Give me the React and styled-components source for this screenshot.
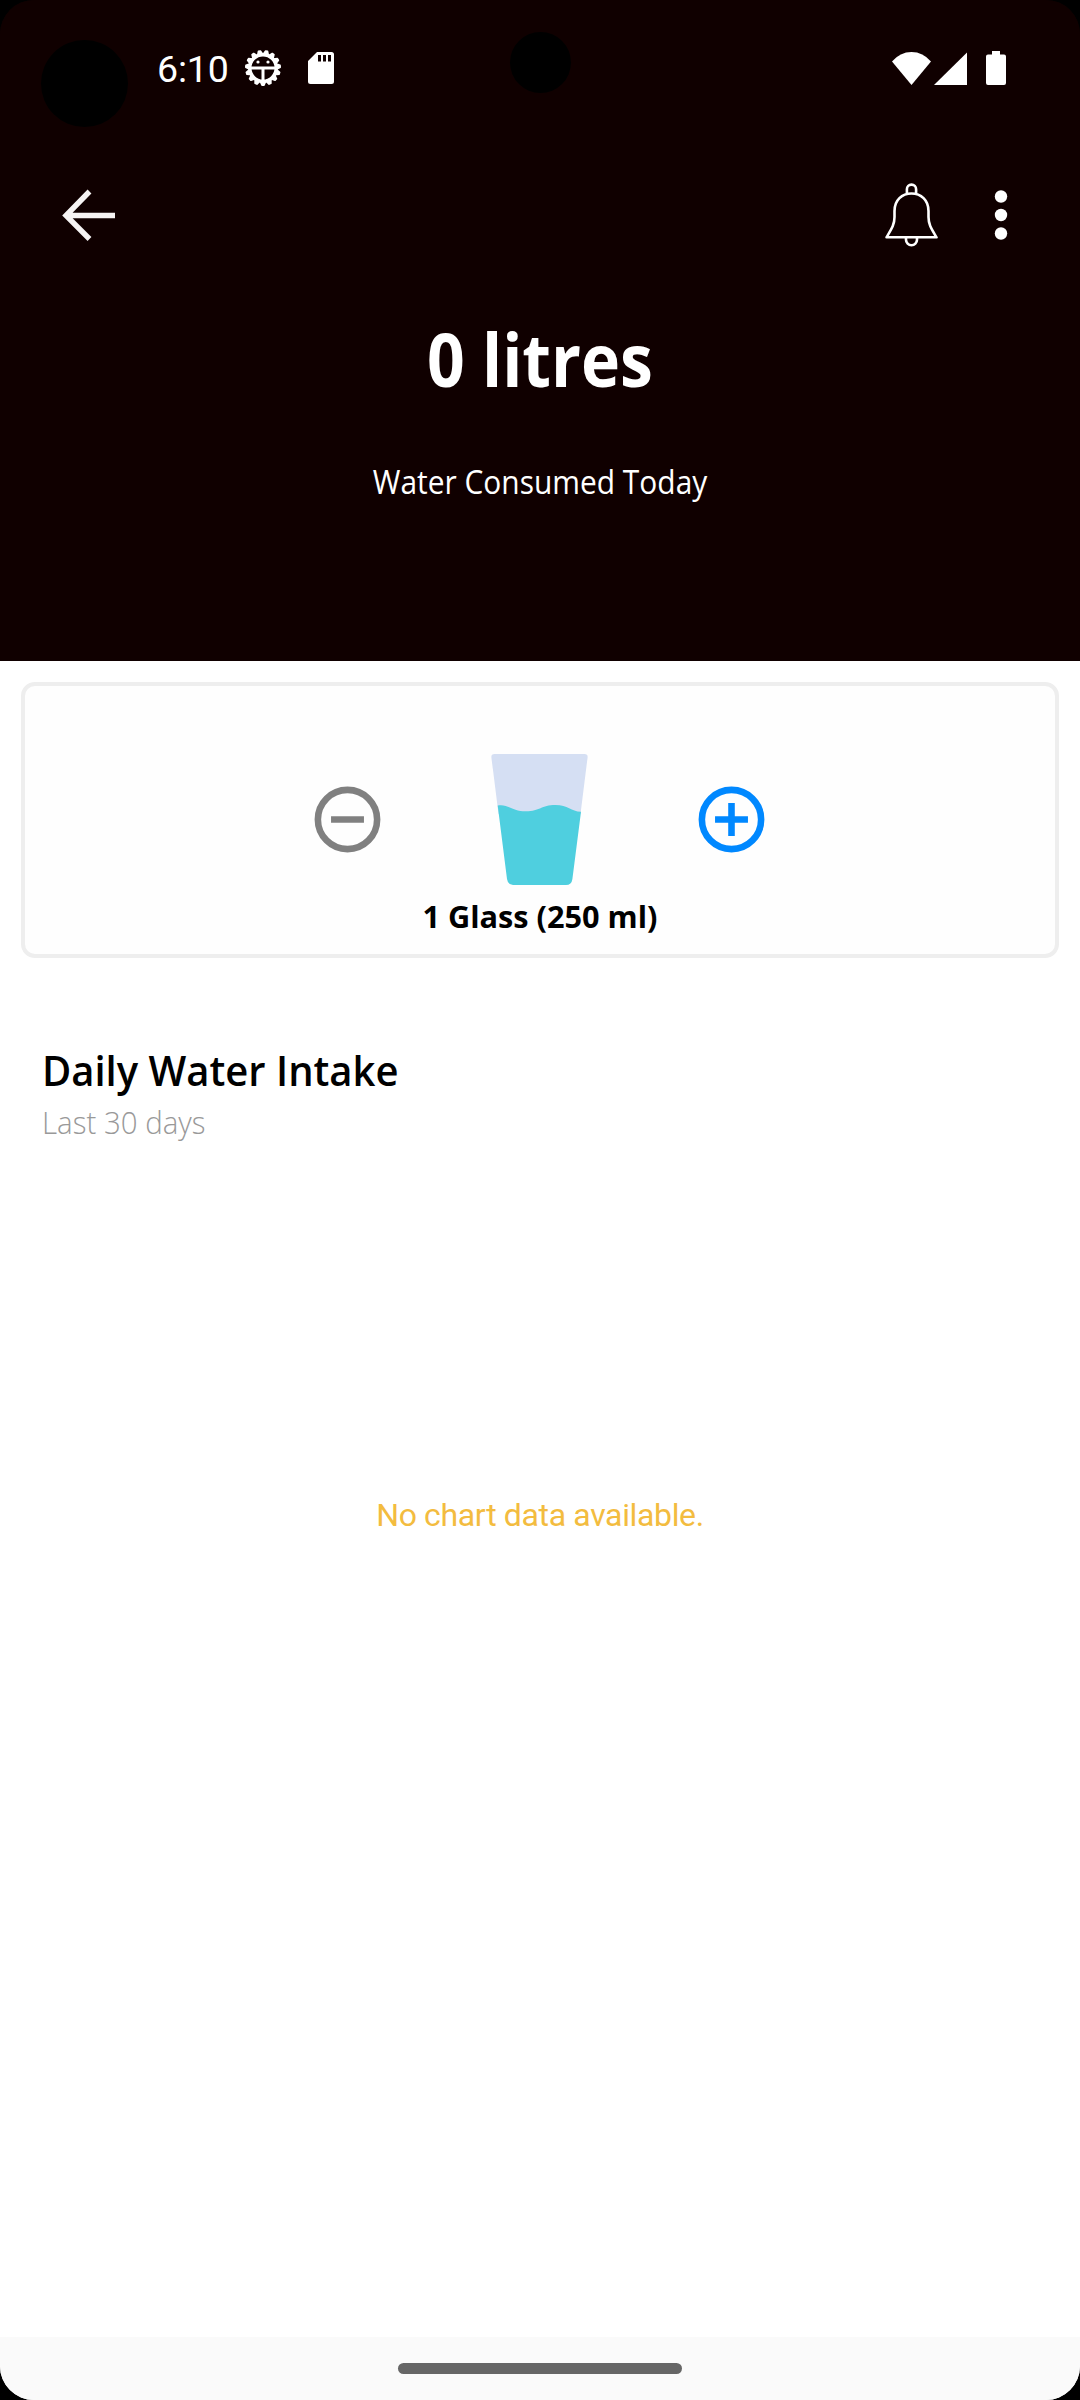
import React from "react";
import styled, { createGlobalStyle } from "styled-components";

const GlobalStyle = createGlobalStyle`
  * { box-sizing: border-box; }
  body { margin: 0; background: #000; }
`;

const Screen = styled.div`
  width: 1080px;
  height: 2400px;
  display: flex;
  flex-direction: column;
  position: relative;
  overflow: hidden;
  border-radius: 34px;
  background: linear-gradient(#100000 600px, #fff 600px);
  font-family: "Open Sans", "Noto Sans", sans-serif;
`;

const Header = styled.header`
  height: 661px;
  background: #100000;
  color: #fff;
  display: flex;
  flex-direction: column;
`;

const Cutout = styled.div`
  position: absolute;
  left: ${(p) => p.$x - p.$r}px;
  top: ${(p) => p.$y - p.$r}px;
  width: ${(p) => p.$r * 2}px;
  height: ${(p) => p.$r * 2}px;
  border-radius: 50%;
  background: #000;
`;

const StatusBar = styled.div`
  height: 136px;
  padding: 0 74px 0 157px;
  display: flex;
  align-items: center;
  justify-content: space-between;
`;

const StatusGroup = styled.div`
  display: flex;
  align-items: center;
`;

const Clock = styled.span`
  width: 86px;
  font: 400 37.5px/44px Roboto, sans-serif;
  letter-spacing: -0.2px;
  padding-top: 2px;
`;

const Icon = styled.svg`
  display: block;
  flex: none;
  margin-left: ${(p) => p.$gap || 0}px;
`;

const Toolbar = styled.div`
  height: 158px;
  padding: 0 72px 0 60px;
  display: flex;
  align-items: center;
  justify-content: space-between;
`;

const IconButton = styled.button`
  border: 0;
  padding: 0;
  background: none;
  display: block;
`;

const Actions = styled.div`
  display: flex;
  align-items: center;
  gap: 56px;
`;

const Label = styled.div`
  font-size: ${(p) => p.$size}px;
  font-weight: ${(p) => p.$weight};
  line-height: ${(p) => p.$line}px;
  color: ${(p) => p.$color || "inherit"};
  margin: ${(p) => p.$top || 0}px 0 0;
  text-align: ${(p) => p.$align || "center"};
  white-space: nowrap;
  transform: scaleX(${(p) => p.$stretch || 1});
  transform-origin: ${(p) => p.$align || "center"} center;
`;

const Card = styled.section`
  margin: 21px 21px 0;
  height: 276px;
  border: 4px solid #eee;
  border-radius: 14px;
  background: #fefefe;
  padding-top: 68px;
  display: flex;
  flex-direction: column;
`;

const Counter = styled.div`
  display: flex;
  justify-content: center;
  align-items: center;
  gap: 104px;
  padding-right: 2px;
`;

const History = styled.section`
  padding: 84px 42px 0;
`;

const ChartArea = styled.div`
  flex: 1;
  display: flex;
  justify-content: center;
  padding-top: 352px;
`;

const ChartMessage = styled.p`
  margin: 0;
  font: 400 32px/38px Roboto, sans-serif;
  letter-spacing: -0.35px;
  color: #f3bc3f;
`;

const NavBar = styled.footer`
  height: 63px;
  background: #fafafa;
  display: flex;
  justify-content: center;
  padding-top: 26px;
`;

const Handle = styled.div`
  width: 284px;
  height: 11px;
  border-radius: 6px;
  background: #666;
`;

const teeth = Array.from({ length: 15 }, (_, i) => i * 24 + 12);

function GearIcon() {
  return (
    <Icon width="40" height="40" viewBox="-20 -20 40 40">
      {teeth.map((a) => (
        <path
          key={a}
          d="M-2.8-13L-1-17.2H1L2.8-13Z"
          fill="#fff"
          stroke="#fff"
          strokeWidth="1.6"
          strokeLinejoin="round"
          transform={`rotate(${a})`}
        />
      ))}
      <circle r="13.2" fill="none" stroke="#fff" strokeWidth="3.4" />
      <path d="M-13 0H13M0 0V14" stroke="#fff" strokeWidth="3" />
      <circle cx="-5" cy="-6" r="1.6" fill="#fff" />
      <circle cx="5" cy="-6" r="1.6" fill="#fff" />
    </Icon>
  );
}

function SdIcon() {
  return (
    <Icon $gap={25} width="26" height="32" viewBox="0 0 26 32">
      <path fill="#fff" fillRule="evenodd" d="M9 0H23.5A2.5 2.5 0 0 1 26 2.5V29.5A2.5 2.5 0 0 1 23.5 32H2.5A2.5 2.5 0 0 1 0 29.5V9ZM10 3V9.6H13V3ZM15 3V9.6H18V3ZM20 3V9.6H23V3Z" />
    </Icon>
  );
}

function BellIcon() {
  return (
    <Icon width="54" height="64" viewBox="0 0 54 64" fill="none" stroke="#fff" strokeWidth="2.6">
      <path d="M22.9 10.5V6.2a4.6 4.6 0 0 1 9.2 0v4.3" />
      <path strokeLinejoin="round" d="M2.5 54.3C7.5 46 10.5 42 10.5 34V28C10.5 17 18 10.5 27.5 10.5S44.500 17 44.500 28v6c0 8 3 12 8 20.3Z" />
      <path d="M22 54.5v2.2a5.5 5.5 0 0 0 11 0v-2.2" />
    </Icon>
  );
}

function RoundButton({ color, plus }) {
  return (
    <IconButton>
      <Icon width="79" height="79" viewBox="0 0 24 24" fill="none" stroke={color} strokeWidth="2">
        <circle cx="12" cy="12" r="9" />
        <path d={plus ? "M7 12H17M12 7V17" : "M7 12H17"} />
      </Icon>
    </IconButton>
  );
}

function GlassIcon() {
  return (
    <Icon width="97" height="131" viewBox="0 0 97 131">
      <path fill="#d5dff3" d="M3.5 0H93.5Q97 0 96.6 3.5L89.5 60H7.5L.4 3.5Q0 0 3.5 0Z" />
      <path fill="#4fcfdf" d="M6.7 51.5C17 49.5 21 57.3 35 57.3C49 57.3 50 51 64.5 51C77 51 80 57.5 90 57.8L81.4 125Q80.6 131 75 131H22Q16.8 131 16 125Z" />
    </Icon>
  );
}

export default function App() {
  return (
    <>
      <GlobalStyle />
      <Screen>
        <Header>
          <StatusBar>
            <StatusGroup>
              <Clock>6:10</Clock>
              <GearIcon />
              <SdIcon />
            </StatusGroup>
            <StatusGroup>
              <Icon width="39" height="33" viewBox="0 0 39 33">
                <path fill="#fff" d="M19.5 33L0 9.5Q8 0 19.5 0T39 9.5Z" />
              </Icon>
              <Icon $gap={3} width="33" height="33" viewBox="0 0 33 33">
                <path fill="#fff" d="M33 .5V33H0Z" />
              </Icon>
              <Icon $gap={19} width="20" height="34" viewBox="0 0 20 34">
                <path fill="#fff" d="M6 0H14V3.5H18A2 2 0 0 1 20 5.500V32A2 2 0 0 1 18 34H2A2 2 0 0 1 0 32V5.500A2 2 0 0 1 2 3.500H6Z" />
              </Icon>
            </StatusGroup>
          </StatusBar>
          <Toolbar>
            <IconButton aria-label="Back">
              <Icon width="56" height="54" viewBox="0 0 56 54" fill="none" stroke="#f6f4f4" strokeWidth="5.4">
                <path d="M55 27.500H6M29.5 3.500L6 27.500L29.5 51" />
              </Icon>
            </IconButton>
            <Actions>
              <IconButton aria-label="Reminders">
                <BellIcon />
              </IconButton>
              <IconButton aria-label="More">
                <Icon width="14" height="50" viewBox="0 0 14 50" fill="#fff">
                  <circle cx="7" cy="6.500" r="6.200" />
                  <circle cx="7" cy="25" r="6.200" />
                  <circle cx="7" cy="43.500" r="6.200" />
                </Icon>
              </IconButton>
            </Actions>
          </Toolbar>
          <Label as="h1" $size={73} $weight={700} $line={100} $top={15} $stretch={0.905}>0 litres</Label>
          <Label $size={32} $weight={400} $line={44} $top={51} $stretch={0.935}>Water Consumed Today</Label>
        </Header>
        <Card>
          <Counter>
            <RoundButton color="#808080" />
            <GlassIcon />
            <RoundButton color="#0088ff" plus />
          </Counter>
          <Label $size={31} $weight={700} $line={44} $top={9} $color="#000" $stretch={0.99}>1 Glass (250 ml)</Label>
        </Card>
        <History>
          <Label as="h2" $size={41.5} $weight={600} $line={56} $align="left" $color="#000" $stretch={0.963}>Daily Water Intake</Label>
          <Label $size={32} $weight={300} $line={44} $top={2} $align="left" $color="#999" $stretch={0.92}>Last 30 days</Label>
        </History>
        <ChartArea>
          <ChartMessage>No chart data available.</ChartMessage>
        </ChartArea>
        <NavBar>
          <Handle />
        </NavBar>
        <Cutout $x={84.5} $y={83} $r={43.5} />
        <Cutout $x={540.5} $y={62.5} $r={30.5} />
      </Screen>
    </>
  );
}
